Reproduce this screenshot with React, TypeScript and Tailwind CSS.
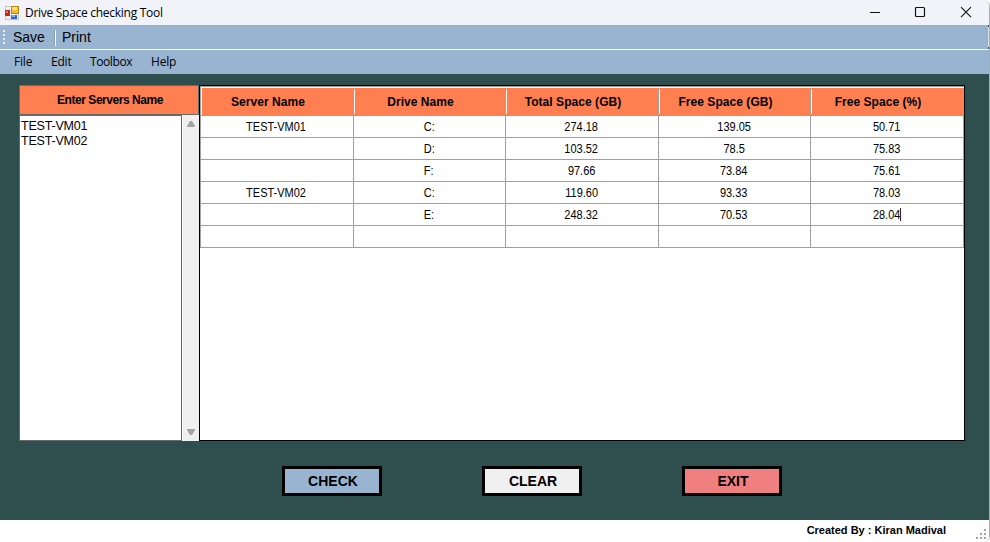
const headers = [
  "Server Name",
  "Drive Name",
  "Total Space (GB)",
  "Free Space (GB)",
  "Free Space (%)",
];

const rows = [
  ["TEST-VM01", "C:", "274.18", "139.05", "50.71"],
  ["", "D:", "103.52", "78.5", "75.83"],
  ["", "F:", "97.66", "73.84", "75.61"],
  ["TEST-VM02", "C:", "119.60", "93.33", "78.03"],
  ["", "E:", "248.32", "70.53", "28.04"],
  ["", "", "", "", ""],
];

const columns = "grid grid-cols-[153px_152px_153px_152px_153px]";

function AppIcon() {
  return (
    <svg width="14" height="14" viewBox="0 0 14 14" className="ml-[5px] shrink-0">
      <rect x="0.5" y="0.5" width="13" height="13" fill="#eef0f2" stroke="#c4c4c4" />
      <rect x="0" y="4" width="5" height="6" fill="#c3281f" />
      <rect x="1" y="5" width="2" height="2" fill="#ea7a68" />
      <rect x="6.5" y="0.5" width="7" height="7" fill="#f4bd2b" stroke="#b8860b" />
      <rect x="7" y="1" width="5" height="3" fill="#fce08a" />
      <rect x="6" y="9" width="6" height="4" fill="#2a64d8" />
      <rect x="7" y="9" width="3" height="2" fill="#7eb2fb" />
    </svg>
  );
}

function TitleBar() {
  return (
    <header className="flex h-[25px] items-center bg-[#f1f3f9]">
      <AppIcon />
      <span className="ml-[6px] font-['Open_Sans','Noto_Sans',sans-serif] text-[12px] leading-none tracking-[-0.28px]">
        Drive Space checking Tool
      </span>
      <div className="ml-auto flex items-center pr-[17px] pb-[2px]">
        <svg width="103" height="12" viewBox="0 0 103 12" fill="none" stroke="#111">
          <path d="M1 6.5h10" />
          <rect x="46.5" y="1.5" width="9" height="9" rx="1" strokeWidth="1.2" />
          <path d="M92 1.2l10 10M102 1.2l-10 10" strokeWidth="1.1" />
        </svg>
      </div>
    </header>
  );
}

function Toolbar() {
  return (
    <div className="flex h-6 items-center bg-[#99b4d1] text-[14px] leading-none">
      <svg width="5" height="16" className="shrink-0" fill="#e9eef4">
        <rect x="3" y="1" width="2" height="2" />
        <rect x="3" y="5" width="2" height="2" />
        <rect x="3" y="9" width="2" height="2" />
        <rect x="3" y="13" width="2" height="2" />
      </svg>
      <span className="ml-[8px] w-[41px]">Save</span>
      <span className="mt-[2px] h-4 w-[2px] border-l border-[#8d9db0] bg-white" />
      <span className="ml-[6px]">Print</span>
      <span className="ml-auto h-full w-px border-y-2 border-[#2f4f4f] bg-[#d9dde0]" />
    </div>
  );
}

function MenuBar() {
  return (
    <nav className="flex h-[25px] items-center border-t border-white bg-[#99b4d1] font-['Open_Sans','Noto_Sans',sans-serif] text-[12px] leading-none">
      <span className="ml-[14px] w-[37px] tracking-[-0.2px]">File</span>
      <span className="w-[39px] tracking-[-0.2px]">Edit</span>
      <span className="w-[61px] tracking-[-0.4px]">Toolbox</span>
      <span className="tracking-[-0.2px]">Help</span>
    </nav>
  );
}

function ServerList() {
  return (
    <section className="flex w-[180px] flex-col">
      <div className="flex h-[30px] items-center justify-center border border-[#696969] bg-[#ff7f50] pl-[2px] text-[12px] font-bold tracking-[-0.45px]">
        Enter Servers Name
      </div>
      <div className="flex h-[326px] bg-[#f0f0f0]">
        <div className="w-[163px] border border-[#696969] bg-white pt-[3px] pl-px text-[12.5px] leading-[15px] tracking-[-0.2px]">
          <p>TEST-VM01</p>
          <p>TEST-VM02</p>
        </div>
        <div className="flex w-[17px] flex-col items-center justify-between border-l border-white py-[5px]">
          <svg width="8" height="7" fill="#a3a3a3">
            <path d="M3 1h2l3 5v1H0V6z" />
          </svg>
          <svg width="8" height="7" fill="#a3a3a3">
            <path d="M0 0h8v1L5 6H3L0 1z" />
          </svg>
        </div>
      </div>
    </section>
  );
}

function DriveTable() {
  return (
    <section className="h-[356px] w-[766px] border border-black bg-white">
      <div className="w-[764px] border-t border-l border-[#a0a0a0]">
        <div className={`${columns} h-[29px] border-t border-b border-t-white border-b-[#a0a0a0] bg-[#ff7f50]`}>
          {headers.map((label, i) => (
            <div key={label} className="flex items-center">
              <span className={`border-white ${i === 0 ? "h-full border-l" : "-ml-px h-[25px] border-r border-l border-l-[#a0a0a0]"}`} />
              <span className="flex-1 pr-[20px] text-center text-[12px] leading-none font-bold tracking-[0.05px]">{label}</span>
            </div>
          ))}
        </div>
        {rows.map((row, r) => (
          <div key={r} className={`${columns} h-[22px]`}>
            {row.map((value, c) => (
              <div key={c} className="flex items-center justify-center border-r border-b border-[#a0a0a0] pt-[2px] pr-px text-[12.5px] leading-none">
                <span className="relative inline-block scale-x-[0.88]">
                  {value}
                  {r === 4 && c === 4 && <i className="absolute top-[-1px] -right-px h-[13px] w-px bg-black" />}
                </span>
              </div>
            ))}
          </div>
        ))}
      </div>
    </section>
  );
}

function ActionButton({ label, color }: { label: string; color: string }) {
  return (
    <button className={`h-[30px] w-[100px] border-3 border-black pl-[2px] text-[14px] leading-none font-bold ${color}`}>
      {label}
    </button>
  );
}

export default function App() {
  return (
    <div className="flex h-[542px] w-[990px] flex-col overflow-hidden rounded-tr-[6px] rounded-br-[6px] border-r border-[#a9adb0] bg-white font-['Liberation_Sans',Arial,sans-serif] text-black">
      <TitleBar />
      <Toolbar />
      <MenuBar />
      <main className="flex h-[446px] flex-col bg-[#2f4f4f] pt-[11px] pl-[19px]">
        <div className="flex">
          <ServerList />
          <DriveTable />
        </div>
        <div className="mt-[25px] ml-[263px] flex gap-[100px]">
          <ActionButton label="CHECK" color="bg-[#99b4d1]" />
          <ActionButton label="CLEAR" color="bg-[#f0f0f0]" />
          <ActionButton label="EXIT" color="bg-[#f08080]" />
        </div>
      </main>
      <footer className="flex h-[22px] items-center justify-end bg-white">
        <span className="mr-[30px] pb-[2px] text-[11px] leading-none font-bold">Created By : Kiran Madival</span>
        <svg width="10" height="10" fill="#a5a5a5" className="mt-[6px] mr-[3px]">
          <rect x="8" y="0" width="2" height="2" />
          <rect x="4" y="4" width="2" height="2" />
          <rect x="8" y="4" width="2" height="2" />
          <rect x="0" y="8" width="2" height="2" />
          <rect x="4" y="8" width="2" height="2" />
          <rect x="8" y="8" width="2" height="2" />
        </svg>
      </footer>
    </div>
  );
}
